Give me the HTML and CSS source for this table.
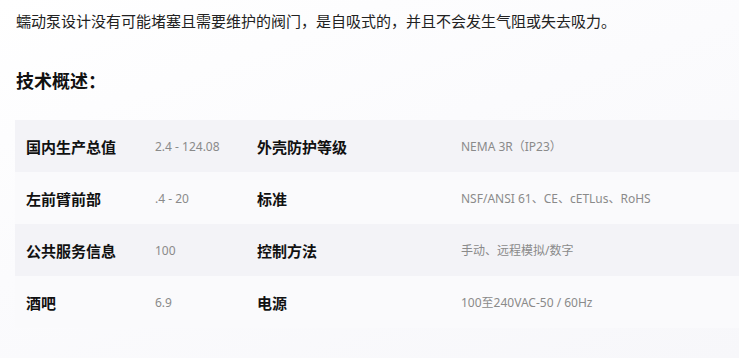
FILE: index.html
```html
<!DOCTYPE html>
<html lang="zh">
<head>
<meta charset="utf-8">
<link rel="stylesheet" href="styles.css">
</head>
<body>
<main class="page">
  <p class="intro">蠕动泵设计没有可能堵塞且需要维护的阀门，是自吸式的，并且不会发生气阻或失去吸力。</p>
  <h2 class="title">技术概述：</h2>
  <div class="specs">
    <div class="row">
      <div class="label">国内生产总值</div>
      <div class="value">2.4 - 124.08</div>
      <div class="label">外壳防护等级</div>
      <div class="value">NEMA 3R（IP23）</div>
    </div>
    <div class="row">
      <div class="label">左前臂前部</div>
      <div class="value">.4 - 20</div>
      <div class="label">标准</div>
      <div class="value">NSF/ANSI 61、CE、cETLus、RoHS</div>
    </div>
    <div class="row">
      <div class="label">公共服务信息</div>
      <div class="value">100</div>
      <div class="label">控制方法</div>
      <div class="value">手动、远程模拟/数字</div>
    </div>
    <div class="row">
      <div class="label">酒吧</div>
      <div class="value">6.9</div>
      <div class="label">电源</div>
      <div class="value">100至240VAC-50 / 60Hz</div>
    </div>
  </div>
</main>
</body>
</html>
```
FILE: styles.css
```css
html, body {
  margin: 0;
  padding: 0;
}
body {
  min-height: 358px;
  background: linear-gradient(160deg, #ffffff 0%, #fbfbfd 45%, #f7f7fa 100%);
  font-family: "Noto Sans", "Noto Sans CJK SC", sans-serif;
  color: #222;
}
.page {
  padding: 9px 0 30px 15px;
}
.intro {
  margin: 0;
  font-size: 15px;
  line-height: 24px;
  color: #222;
  padding-left: 1px;
}
.title {
  margin: 36px 0 0 1px;
  font-size: 18px;
  line-height: 24px;
  font-weight: 700;
  color: #111;
}
.specs {
  margin-top: 27px;
  display: flex;
  flex-direction: column;
}
.row {
  display: grid;
  grid-template-columns: 129px 102px 204px 1fr;
  height: 52px;
  align-items: center;
  background: #f3f3f7;
}
.row:nth-child(even) {
  background: #fafafc;
}
.label {
  padding-left: 11px;
  font-size: 15px;
  font-weight: 700;
  color: #111;
}
.value {
  padding-left: 11px;
  font-size: 12px;
  color: #8a8a8a;
}
```
